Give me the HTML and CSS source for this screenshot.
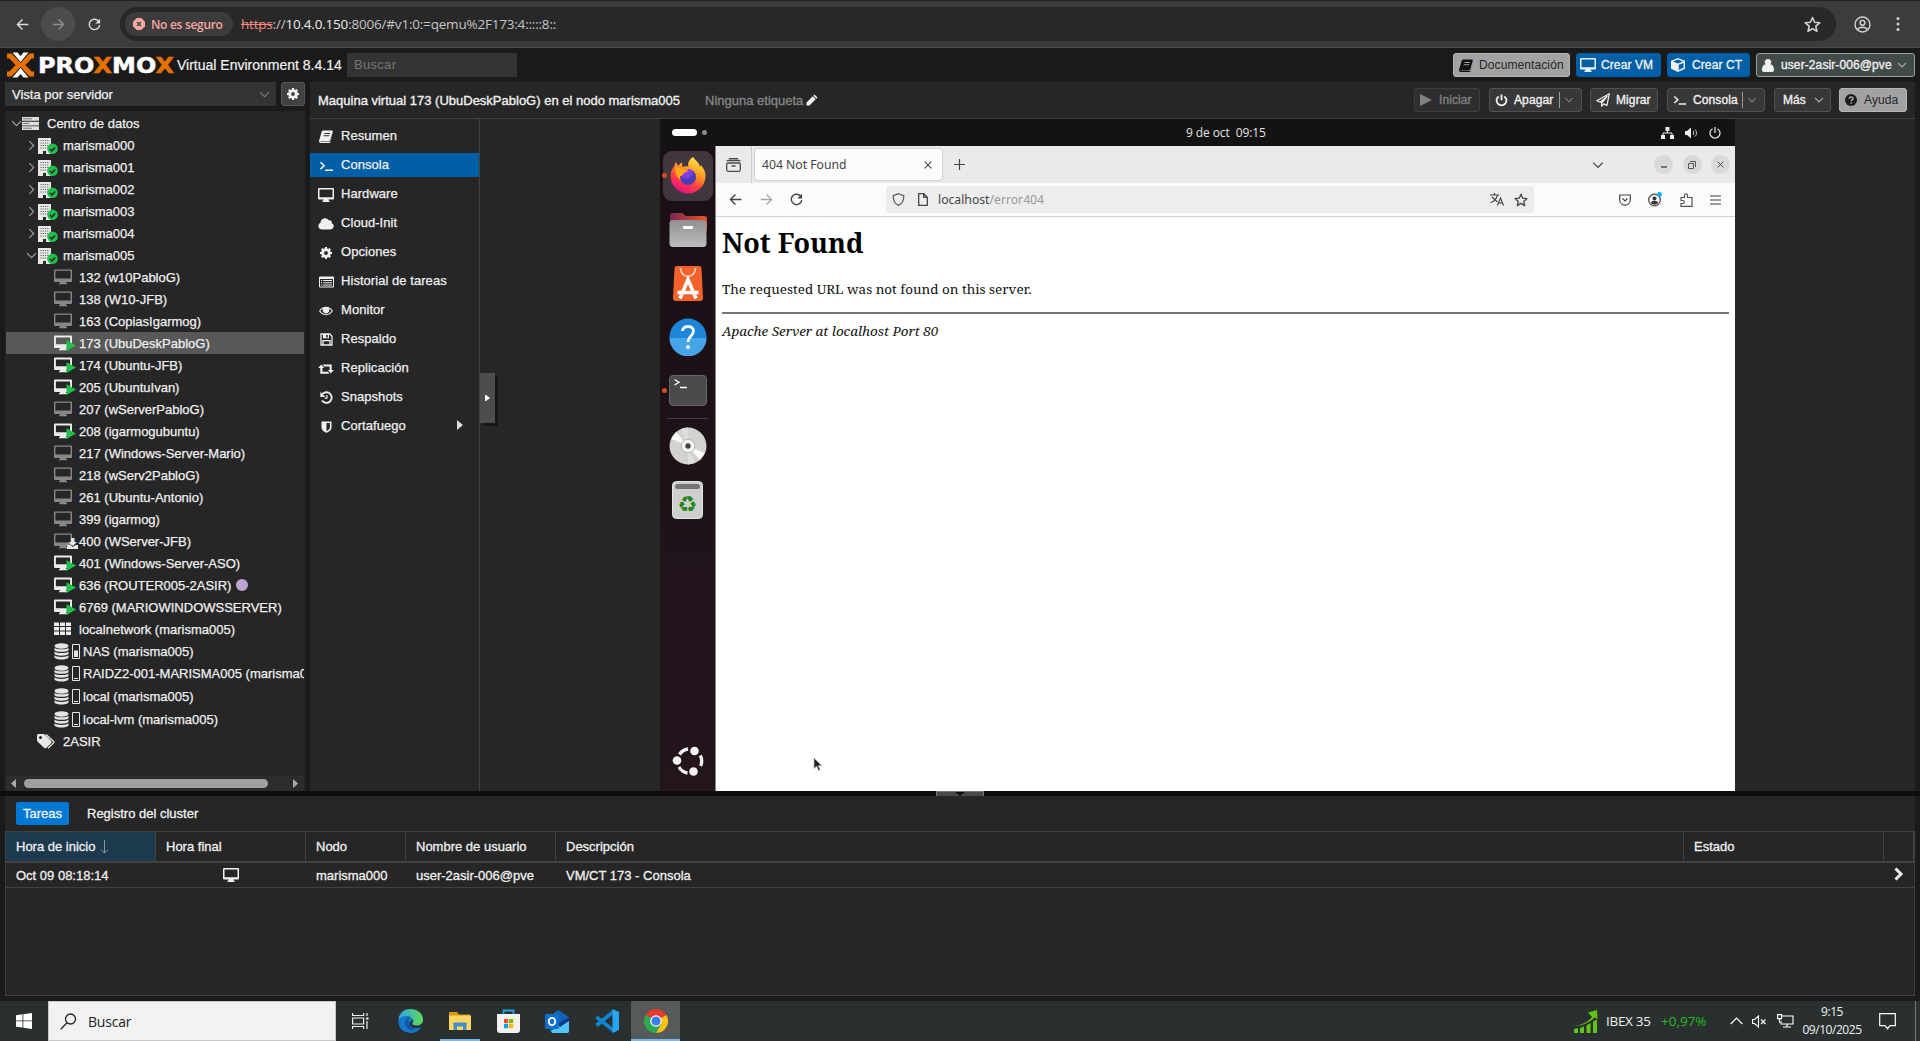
FILE: index.html
```html
<!DOCTYPE html>
<html lang="es">
<head>
<meta charset="utf-8">
<title>marisma005 - Proxmox Virtual Environment</title>
<link rel="stylesheet" href="styles.css">
</head>
<body>
<svg class="defs" width="0" height="0" aria-hidden="true">
  <symbol id="i-monitor" viewBox="0 0 18 16"><path fill-rule="evenodd" d="M1.5 0h15A1.500 1.500 0 0 1 18 1.500v10a1.500 1.500 0 0 1-1.500 1.500H11.500V14h1.200v1.500H5.300V14h1.200V13h-5A1.500 1.500 0 0 1 0 11.500v-10A1.500 1.500 0 0 1 1.500 0zm0 1.500v8h15v-8z"/></symbol>
  <symbol id="i-screen" viewBox="0 0 16 14"><path fill-rule="evenodd" d="M1 0h14a1 1 0 0 1 1 1v9.500a1 1 0 0 1-1 1h-4.500v1h1V14h-7v-1.500h1v-1H1a1 1 0 0 1-1-1V1a1 1 0 0 1 1-1zm.5 1.500v7.700h13V1.500z"/></symbol>
  <symbol id="i-play" viewBox="0 0 12 12"><path d="M0 0l12 6-12 6z"/></symbol>
  <symbol id="i-chev" viewBox="0 0 10 10"><path d="M1 3l4 4 4-4" fill="none" stroke="currentColor" stroke-width="1.100"/></symbol>
  <symbol id="i-next" viewBox="0 0 10 10"><path d="M3 1l4 4-4 4" fill="none" stroke="currentColor" stroke-width="1.100"/></symbol>
  <symbol id="i-node" viewBox="0 0 20 18"><path fill="#e8e8e8" d="M0 1h13v16H0z"/><path stroke="#666" stroke-width="1" stroke-dasharray="1.200 1" fill="none" d="M2.500 3.500h9M2.500 6h9M2.500 8.500h9M2.500 11h9"/><path fill="#262626" d="M5 14h3v3H5z"/><circle cx="14.500" cy="11.800" r="5.300" fill="#21bf4b"/><path d="M12 12l1.900 1.900 3.300-3.500" fill="none" stroke="#262626" stroke-width="1.500"/></symbol>
  <symbol id="i-off" viewBox="0 0 22 16"><path fill="#888" fill-rule="evenodd" d="M1 .5h16a1 1 0 0 1 1 1V12a1 1 0 0 1-1 1h-5v1h1v1.300H5V14h1v-1H1a1 1 0 0 1-1-1V1.500a1 1 0 0 1 1-1zm.4 1.300v7.800h15.200V1.800z"/></symbol>
  <symbol id="i-on" viewBox="0 0 22 16"><path fill="#ececec" fill-rule="evenodd" d="M1 .5h16a1 1 0 0 1 1 1V12a1 1 0 0 1-1 1h-5v1h1v1.300H5V14h1v-1H1a1 1 0 0 1-1-1V1.500a1 1 0 0 1 1-1zm.9 1.900v6.800h14.200V2.400z"/><path fill="#21bf4b" d="M12.500 5.300l9.500 5.300-9.500 5.400z"/></symbol>
  <symbol id="i-db" viewBox="0 0 26 17"><g fill="#e4e4e4"><ellipse cx="7.500" cy="3" rx="7" ry="2.700"/><path d="M.5 4.700c2 2.100 12 2.100 14 0v2.500c-2 2.200-12 2.200-14 0zM.5 8.500c2 2.100 12 2.100 14 0V11c-2 2.200-12 2.200-14 0zM.5 12.300c2 2.100 12 2.100 14 0v2.200c-2 2.700-12 2.700-14 0z"/></g><path d="M18.500 1.500h7v14h-7z" fill="none" stroke="#e4e4e4"/></symbol>
  <symbol id="i-book" viewBox="0 0 14 13"><path fill-rule="evenodd" d="M4.300.5h8.400c.8 0 1.200.6 1 1.400L11.300 10c-.2.800-.9 1.400-1.700 1.400H2c-.6 0-.9.300-.5.600h8.700c.8 0 1.300-.4 1.600-1.200L13.900 4l-2.300 8c-.3.700-.8 1-1.600 1H1.700C.3 13-.4 11.700.2 10.300L2.600 2C2.900 1 3.500.5 4.300.5zM5.500 3l-.3 1h5.600l.3-1zm-.7 2.300l-.3 1h5.600l.3-1z"/></symbol>
  <symbol id="i-term" viewBox="0 0 16 12"><path d="M1.500 2l4 3.700-4 3.700M6.500 10.500H15" fill="none" stroke="currentColor" stroke-width="1.700"/></symbol>
  <symbol id="i-cloud" viewBox="0 0 16 12"><path d="M4 11.500h8.500a3.300 3.300 0 0 0 1.300-6.300 2.400 2.400 0 0 0-3-2.900A4.500 4.500 0 0 0 2.500 4.800 3.500 3.500 0 0 0 4 11.500z"/></symbol>
  <symbol id="i-gear" viewBox="0 0 14 14"><path fill-rule="evenodd" d="M5.900 1h2.200l.4 1.700 1.100.5 1.500-.9 1.600 1.600-.9 1.500.5 1.100 1.700.4v2.200l-1.700.4-.5 1.100.9 1.500-1.600 1.600-1.500-.9-1.100.5-.4 1.700H5.900l-.4-1.700-1.100-.5-1.500.9-1.600-1.600.9-1.500-.5-1.100L0 9.100V6.900l1.700-.4.500-1.100-.9-1.500 1.600-1.600 1.500.9 1.100-.5zM7 5.800a2.200 2.200 0 1 0 0 4.400 2.200 2.200 0 0 0 0-4.400z" transform="translate(0 -1)"/></symbol>
  <symbol id="i-list" viewBox="0 0 15 12"><path fill-rule="evenodd" d="M1 .5h13a1 1 0 0 1 1 1v9a1 1 0 0 1-1 1H1a1 1 0 0 1-1-1v-9a1 1 0 0 1 1-1zM1 3v7.500h13V3zm1 1h1.200v1.100H2zm2.200 0H13v1.100H4.200zM2 6.200h1.200v1.100H2zm2.200 0H13v1.100H4.200zM2 8.400h1.200v1.100H2zm2.200 0H13v1.100H4.200z"/></symbol>
  <symbol id="i-eye" viewBox="0 0 15 10"><path fill-rule="evenodd" d="M7.500.5C11 .5 13.500 2.600 15 5c-1.500 2.400-4 4.500-7.500 4.500S1.500 7.400 0 5C1.500 2.600 4 .5 7.500.5zM4.200 2.300A8 8 0 0 0 1.400 5c1.400 2 3.500 3.400 6.100 3.400S12.200 7 13.600 5a8 8 0 0 0-2.800-2.700 3.700 3.700 0 1 1-6.600 0z"/></symbol>
  <symbol id="i-save" viewBox="0 0 13 13"><path fill="none" stroke="currentColor" stroke-width="1.300" d="M1 1h8.800L12 3.200V12H1zM3 12V7.700h7V12"/><path fill-rule="evenodd" d="M3 1h6v4.300H3zm3.200 1v2.400h1.600V2z"/></symbol>
  <symbol id="i-retweet" viewBox="0 0 16 12"><path d="M3.200 1.500L6.300 5H4.400v3.700h5.400l1.600 2H2.300V5H.2zM12.800 10.500L9.700 7h1.900V3.400H6.200l-1.600-2h9.100V7h2.100z"/></symbol>
  <symbol id="i-hist" viewBox="0 0 13 13"><path d="M2.300 3.200A5.300 5.300 0 1 1 2 9.500" fill="none" stroke="currentColor" stroke-width="1.900"/><path d="M.3 1v5h5z"/><path d="M6.900 4v3.200H4.700" fill="none" stroke="currentColor" stroke-width="1.200"/></symbol>
  <symbol id="i-shield" viewBox="0 0 11 12"><path fill-rule="evenodd" d="M.5.5h10v6c0 2.700-3 4.600-5 5.300C3.500 11.100.5 9.200.5 6.500zM5.500 2v8.100c1.700-.8 3.400-2 3.400-3.600V2z"/></symbol>
  <symbol id="i-pencil" viewBox="0 0 12 12"><path d="M8.500.5l3 3-1.200 1.200-3-3zM6.700 2.300l3 3L3.500 11.500H.5v-3z"/></symbol>
  <symbol id="i-cube" viewBox="0 0 14 14"><path fill-rule="evenodd" d="M7 0l7 2.700v8L7 14l-7-3.300v-8zm0 1.600L2 3.500l5 1.900 5-1.900zm.8 5.200v5.200l4.800-2.400V5z"/></symbol>
  <symbol id="i-user" viewBox="0 0 12 13"><path d="M6 0a3.100 3.100 0 0 1 2.300 5.300C10.800 5.600 12 8 12 11c0 1.200-.8 2-1.800 2H1.800C.8 13 0 12.200 0 11c0-3 1.200-5.400 3.700-5.700A3.100 3.100 0 0 1 6 0z"/></symbol>
  <symbol id="i-power" viewBox="0 0 14 14"><path d="M4 2.600a5.300 5.300 0 1 0 6 0M7 .5v6.300" fill="none" stroke="currentColor" stroke-width="2"/></symbol>
  <symbol id="i-plane" viewBox="0 0 14 14"><path d="M13.300.7L.8 7.800l3.400 1.500L11 3.500 5.600 10v3.300l2-2.400 3.400 1.500z" fill="none" stroke="currentColor" stroke-width="1.200" stroke-linejoin="round"/></symbol>
  <symbol id="i-x" viewBox="0 0 8 8"><path d="M.7.700l6.600 6.600M7.300.700L.700 7.300" fill="none" stroke="currentColor" stroke-width="1.100"/></symbol>
  <symbol id="i-star" viewBox="0 0 14 14"><path d="M7 1.200l1.700 4 4.300.4-3.300 2.800 1 4.200L7 10.400l-3.700 2.200 1-4.200L1 5.600l4.300-.4z" fill="none" stroke="currentColor" stroke-width="1.300" stroke-linejoin="round"/></symbol>
  <symbol id="i-reload" viewBox="0 0 14 14"><path d="M12 4.300A5.600 5.600 0 1 0 12.600 7.500" fill="none" stroke="currentColor" stroke-width="1.500"/><path d="M13 .8v5.100H7.900z"/></symbol>
  <symbol id="i-back" viewBox="0 0 14 14"><path d="M13.300 7H1.500M7 1.500L1.500 7 7 12.500" fill="none" stroke="currentColor" stroke-width="1.500"/></symbol>
  <symbol id="i-fwd" viewBox="0 0 14 14"><path d="M.7 7h11.800M7 1.500L12.500 7 7 12.500" fill="none" stroke="currentColor" stroke-width="1.500"/></symbol>
</svg>

<header class="chrome">
  <span class="nav"><svg width="13" height="13"><use href="#i-back"/></svg></span>
  <span class="nav fwd"><svg width="13" height="13"><use href="#i-fwd"/></svg></span>
  <span class="nav"><svg width="13" height="13"><use href="#i-reload"/></svg></span>
  <div class="omni">
    <span class="chip"><svg width="12" height="12" viewBox="0 0 12 12"><path d="M3.700 0h4.600L12 3.700v4.600L8.300 12H3.700L0 8.300V3.700z" fill="#f6a9a3"/><path d="M4 4l4 4M8 4l-4 4" stroke="#3c3c3c" stroke-width="1.400"/></svg><b>No es seguro</b></span>
    <span class="url"><s>https</s><i>://</i>10.4.0.150<i class="port">:8006/#v1:0:=qemu%2F173:4:::::8::</i></span>
    <svg class="fav" width="17" height="17"><use href="#i-star"/></svg>
  </div>
  <svg class="profile" width="17" height="17" viewBox="0 0 17 17" fill="none" stroke="#d4d4d4" stroke-width="1.400"><circle cx="8.500" cy="8.500" r="7.500"/><circle cx="8.500" cy="6.800" r="2.400"/><path d="M3.500 13.700c2-3.300 8-3.300 10 0"/></svg>
  <svg class="dots" width="4" height="16" viewBox="0 0 4 16" fill="#d4d4d4"><circle cx="2" cy="2.500" r="1.500"/><circle cx="2" cy="8" r="1.500"/><circle cx="2" cy="13.500" r="1.500"/></svg>
</header>

<div class="pve-head">
  <svg class="logo" width="170" height="28" viewBox="0 0 170 28">
    <g fill="none" stroke-width="5"><path stroke="#e57000" d="M2 5h3.500l8.500 9-8.500 9H2M29 5h-3.500L17 14l8.500 9H29"/></g>
    <path fill="#fff" d="M7.500 1.500h5l3 3.500 3-3.500h5L15.500 11zM7.500 26.500h5l3-3.500 3 3.500h5L15.500 17z"/>
    <text x="33" y="22" textLength="136" lengthAdjust="spacingAndGlyphs" class="logo-t">PRO<tspan class="or">X</tspan>MO<tspan class="or">X</tspan></text>
  </svg>
  <span class="ver">Virtual Environment 8.4.14</span>
  <div class="search">Buscar</div>
  <div class="head-btns">
    <span class="btn light w117"><svg width="14" height="13"><use href="#i-book"/></svg>Documentación</span>
    <span class="btn blue w85"><svg width="16" height="14"><use href="#i-screen"/></svg>Crear VM</span>
    <span class="btn blue w83"><svg width="14" height="14"><use href="#i-cube"/></svg>Crear CT</span>
    <span class="btn usr w159"><svg width="12" height="13"><use href="#i-user"/></svg>user-2asir-006@pve<svg class="cv" width="10" height="10"><use href="#i-chev"/></svg></span>
  </div>
</div>

<main class="mid">
  <aside class="left">
    <div class="view"><div class="select">Vista por servidor<svg width="11" height="11"><use href="#i-chev"/></svg></div><span class="gearbtn"><svg width="12" height="12"><use href="#i-gear"/></svg></span></div>
    <div class="tree">
      <div class="row"><svg class="ex" width="11" height="11"><use href="#i-chev"/></svg><svg class="srv" width="17" height="13" viewBox="0 0 17 13"><path fill="#dedede" d="M0 0h17v3.700H0zM0 4.700h17v3.700H0zM0 9.300h17V13H0z"/><path stroke="#777" d="M1 1.800h9M1 6.500h6M1 11.200h9"/></svg>Centro de datos</div>
      <div class="row n1"><svg class="ex" width="11" height="11"><use href="#i-next"/></svg><svg width="20" height="18"><use href="#i-node"/></svg>marisma000</div>
      <div class="row n1"><svg class="ex" width="11" height="11"><use href="#i-next"/></svg><svg width="20" height="18"><use href="#i-node"/></svg>marisma001</div>
      <div class="row n1"><svg class="ex" width="11" height="11"><use href="#i-next"/></svg><svg width="20" height="18"><use href="#i-node"/></svg>marisma002</div>
      <div class="row n1"><svg class="ex" width="11" height="11"><use href="#i-next"/></svg><svg width="20" height="18"><use href="#i-node"/></svg>marisma003</div>
      <div class="row n1"><svg class="ex" width="11" height="11"><use href="#i-next"/></svg><svg width="20" height="18"><use href="#i-node"/></svg>marisma004</div>
      <div class="row n1"><svg class="ex" width="11" height="11"><use href="#i-chev"/></svg><svg width="20" height="18"><use href="#i-node"/></svg>marisma005</div>
      <div class="row n2"><svg width="22" height="16"><use href="#i-off"/></svg>132 (w10PabloG)</div>
      <div class="row n2"><svg width="22" height="16"><use href="#i-off"/></svg>138 (W10-JFB)</div>
      <div class="row n2"><svg width="22" height="16"><use href="#i-off"/></svg>163 (CopiasIgarmog)</div>
      <div class="row n2 sel"><svg width="22" height="16"><use href="#i-on"/></svg>173 (UbuDeskPabloG)</div>
      <div class="row n2"><svg width="22" height="16"><use href="#i-on"/></svg>174 (Ubuntu-JFB)</div>
      <div class="row n2"><svg width="22" height="16"><use href="#i-on"/></svg>205 (UbuntuIvan)</div>
      <div class="row n2"><svg width="22" height="16"><use href="#i-off"/></svg>207 (wServerPabloG)</div>
      <div class="row n2"><svg width="22" height="16"><use href="#i-on"/></svg>208 (igarmogubuntu)</div>
      <div class="row n2"><svg width="22" height="16"><use href="#i-off"/></svg>217 (Windows-Server-Mario)</div>
      <div class="row n2"><svg width="22" height="16"><use href="#i-off"/></svg>218 (wServ2PabloG)</div>
      <div class="row n2"><svg width="22" height="16"><use href="#i-off"/></svg>261 (Ubuntu-Antonio)</div>
      <div class="row n2"><svg width="22" height="16"><use href="#i-off"/></svg>399 (igarmog)</div>
      <div class="row n2"><svg class="wide" width="25" height="16" viewBox="0 0 25 16"><use href="#i-off" width="22" height="16"/><path fill="#e8e8e8" d="M17 5h3.500v4H23l-4.200 4-4.300-4H17zM13 12h3l2.800 2 2.700-2H24v4H13z"/></svg>400 (WServer-JFB)</div>
      <div class="row n2"><svg width="22" height="16"><use href="#i-on"/></svg>401 (Windows-Server-ASO)</div>
      <div class="row n2"><svg width="22" height="16"><use href="#i-on"/></svg>636 (ROUTER005-2ASIR)<span class="tagdot"></span></div>
      <div class="row n2"><svg width="22" height="16"><use href="#i-on"/></svg>6769 (MARIOWINDOWSSERVER)</div>
      <div class="row n2"><svg width="22" height="14" viewBox="0 0 22 14"><path fill="#ececec" d="M0 .5h5V4H0zm6 0h5V4H6zm6 0h5V4h-5zM0 5h5v3.500H0zm6 0h5v3.500H6zm6 0h5v3.500h-5zM0 9.500h5V13H0zm6 0h5V13H6zm6 0h5V13h-5z"/></svg>localnetwork (marisma005)</div>
      <div class="row n2 st"><svg width="26" height="17" viewBox="0 0 26 17"><use href="#i-db"/><path fill="#e4e4e4" d="M20 7.500h4V14h-4z"/></svg>NAS (marisma005)</div>
      <div class="row n2 st"><svg width="26" height="17" viewBox="0 0 26 17"><use href="#i-db"/><path fill="#e4e4e4" d="M20 13h4v1h-4z"/></svg>RAIDZ2-001-MARISMA005 (marisma005)</div>
      <div class="row n2 st"><svg width="26" height="17" viewBox="0 0 26 17"><use href="#i-db"/><path fill="#e4e4e4" d="M20 13h4v1h-4z"/></svg>local (marisma005)</div>
      <div class="row n2 st"><svg width="26" height="17" viewBox="0 0 26 17"><use href="#i-db"/><path fill="#e4e4e4" d="M20 13h4v1h-4z"/></svg>local-lvm (marisma005)</div>
      <div class="row tag"><svg width="19" height="15" viewBox="0 0 19 15"><path fill="#e8e8e8" fill-rule="evenodd" d="M0 1.500C0 .7.700 0 1.500 0h4.600c.8 0 1.600.3 2.200.9l6 6c.6.600.6 1.400 0 2l-5 5c-.6.600-1.400.6-2 0l-6.400-6C.3 7.300 0 6.500 0 5.700zM3.500 2a1.500 1.500 0 1 0 0 3 1.500 1.500 0 0 0 0-3z"/><path d="M9 .5l7.500 6.700c.7.700.7 1 0 1.700L11 14.300" stroke="#e8e8e8" stroke-width="1.300" fill="none"/></svg>2ASIR</div>
      <div class="hscroll"><svg width="5" height="9" viewBox="0 0 5 9"><path fill="#aaa" d="M5 0v9L0 4.500z"/></svg><span class="thumb"></span><svg width="5" height="9" viewBox="0 0 5 9"><path fill="#aaa" d="M0 0v9l5-4.500z"/></svg></div>
    </div>
  </aside>

  <section class="main">
    <div class="title"><span class="tt">Maquina virtual 173 (UbuDeskPabloG) en el nodo marisma005</span><span class="notag">Ninguna etiqueta</span><svg class="pen" width="12" height="12"><use href="#i-pencil"/></svg>
      <div class="tools">
        <span class="btn dis w66"><svg width="12" height="12"><use href="#i-play"/></svg>Iniciar</span>
        <span class="btn w93"><svg width="13" height="13"><use href="#i-power"/></svg>Apagar<svg class="cv split" width="21" height="16" viewBox="0 0 21 16"><path d="M.5 0v16M6.500 6l3.500 4 3.500-4" fill="none" stroke="#999"/></svg></span>
        <span class="btn w68"><svg width="14" height="14"><use href="#i-plane"/></svg>Migrar</span>
        <span class="btn w98"><svg width="14" height="12"><use href="#i-term"/></svg>Consola<svg class="cv split" width="21" height="16" viewBox="0 0 21 16"><path d="M.5 0v16M6.500 6l3.500 4 3.500-4" fill="none" stroke="#999"/></svg></span>
        <span class="btn w57 more">Más<svg class="cv" width="10" height="10"><use href="#i-chev"/></svg></span>
        <span class="btn light w68 help"><svg width="12" height="12" viewBox="0 0 12 12"><circle cx="6" cy="6" r="6" fill="#1b1b1b"/><path d="M4.100 4.700c.1-2.400 3.900-2.300 3.900-.2C8 6 6.200 5.900 6.200 7.300M6.200 8.200v1.500" stroke="#ababab" stroke-width="1.500" fill="none"/></svg>Ayuda</span>
      </div>
    </div>
    <div class="body">
      <nav class="menu">
        <div class="mi"><span><svg width="14" height="13"><use href="#i-book"/></svg></span>Resumen</div>
        <div class="mi act"><span><svg width="15" height="12"><use href="#i-term"/></svg></span>Consola</div>
        <div class="mi"><span><svg width="16" height="14"><use href="#i-screen"/></svg></span>Hardware</div>
        <div class="mi"><span><svg width="16" height="12"><use href="#i-cloud"/></svg></span>Cloud-Init</div>
        <div class="mi"><span><svg width="12" height="12"><use href="#i-gear"/></svg></span>Opciones</div>
        <div class="mi"><span><svg width="15" height="12"><use href="#i-list"/></svg></span>Historial de tareas</div>
        <div class="mi"><span><svg width="14" height="10"><use href="#i-eye"/></svg></span>Monitor</div>
        <div class="mi"><span><svg width="13" height="13"><use href="#i-save"/></svg></span>Respaldo</div>
        <div class="mi"><span><svg width="16" height="12"><use href="#i-retweet"/></svg></span>Replicación</div>
        <div class="mi"><span><svg width="13" height="13"><use href="#i-hist"/></svg></span>Snapshots</div>
        <div class="mi"><span><svg width="11" height="12"><use href="#i-shield"/></svg></span>Cortafuego<svg class="sub" width="6" height="10" viewBox="0 0 6 10"><path d="M0 0l6 5-6 5z" fill="#ddd"/></svg></div>
        <div class="handle"><svg width="5" height="6" viewBox="0 0 5 6"><path d="M0 0h1l4 3-4 3H0z" fill="#fff"/></svg></div>
      </nav>

      <div class="vm">
        <div class="gbar"><span class="pill"></span><span class="pd"></span><span class="date">9 de oct&nbsp; 09:15</span>
          <div class="gi">
            <svg width="13" height="12" viewBox="0 0 13 12" fill="#eee"><path d="M4.500 0h4v4h-4zM0 8h4v4H0zM9 8h4v4H9z"/><path d="M6.500 3v3M2 8.500V6h9v2.500" stroke="#eee" fill="none"/></svg>
            <svg width="13" height="12" viewBox="0 0 13 12" fill="#eee"><path d="M0 4h2l4-3.500v11L2 8H0z"/><path d="M8 4c1 1.300 1 2.700 0 4M10 2.500c2 2.200 2 4.800 0 7" stroke="#ccc" fill="none"/></svg>
            <svg width="12" height="12" viewBox="0 0 12 12" fill="none" stroke="#ddd" stroke-width="1.300"><path d="M3.500 1.700a5 5 0 1 0 5 0M6 0v6"/></svg>
          </div>
        </div>
        <div class="desk">
          <div class="dock">
            <div class="tile"><svg width="36" height="37" viewBox="0 0 36 37"><defs><linearGradient id="ff" x1=".8" y1="0" x2=".3" y2="1"><stop offset="0" stop-color="#fff04a"/><stop offset=".4" stop-color="#ff9a1f"/><stop offset=".7" stop-color="#ff3b47"/><stop offset="1" stop-color="#e0108a"/></linearGradient><radialGradient id="fp" cx=".4" cy=".2"><stop offset="0" stop-color="#b833e1"/><stop offset=".6" stop-color="#7542e5"/><stop offset="1" stop-color="#4b3bb5"/></radialGradient></defs><path fill="url(#ff)" d="M23 0c2 3 5 5 6 7l1 3 1-2c2 3 4.500 6 4.500 11A17.500 17.500 0 0 1 .5 19c0-4 2-8 4-10l1-4 3 4c1-2 2-3 3.500-3.500l.5 4.500c2-1 4-1 6-.5C17 6 20 2 23 0z"/><circle cx="18" cy="20" r="8" fill="url(#fp)"/><path fill="#ffa61f" d="M5 10c3 0 5 1 8 2.500h5c0 2-3 2.500-4 3.500s-1.500 3-4 3c1 3 0 4-1 3-3-3-4-8-4-12z"/></svg></div>
            <svg class="d-files" width="38" height="34" viewBox="0 0 38 34"><defs><linearGradient id="fo"><stop offset="0" stop-color="#7c2457"/><stop offset="1" stop-color="#e95420"/></linearGradient><linearGradient id="fg" x2="0" y2="1"><stop offset="0" stop-color="#919191"/><stop offset="1" stop-color="#bdbdbd"/></linearGradient></defs><path fill="url(#fo)" d="M1 3a3 3 0 0 1 3-3h9l4 3h18a3 3 0 0 1 3 3v12H1z"/><rect x=".5" y="7" width="37" height="27" rx="3.500" fill="url(#fg)"/><rect x="14" y="13" width="10" height="3" rx="1" fill="#fff"/></svg>
            <svg class="d-app" width="30" height="35" viewBox="0 0 30 35"><path fill="#f4622c" d="M4 0h22a2.500 2.500 0 0 1 2.500 2.500L30 32a3 3 0 0 1-3 3H3a3 3 0 0 1-3-3L1.500 2.500A2.500 2.500 0 0 1 4 0z"/><path fill="none" stroke="#fbd9cb" stroke-width="1.500" d="M7.500 2c0 11 15 11 15 0"/><path fill="none" stroke="#fff" stroke-width="3.500" d="M7 32.500l8-19 8 19M4.500 26.500h21"/></svg>
            <svg class="d-help" width="38" height="38" viewBox="0 0 38 38"><circle cx="19" cy="19" r="18.500" fill="#1d86d8"/><path fill="#45a5e6" d="M.5 20h37a18.500 18.500 0 0 1-37 0z"/><path fill="none" stroke="#fff" stroke-width="2.800" d="M13.500 13c0-6 11-6 11 0 0 5-5.500 5-5.500 11"/><circle cx="19" cy="29" r="2" fill="#fff"/></svg>
            <svg class="d-term" width="38" height="31" viewBox="0 0 38 31"><rect x=".5" y=".5" width="37" height="30" rx="3.500" fill="#4a4a4a" stroke="#666"/><path fill="none" stroke="#fff" stroke-width="1.300" d="M5.500 4.500L10 7.300 5.500 10M11 12.500h7"/></svg>
            <span class="sepd"></span>
            <svg class="d-disc" width="38" height="38" viewBox="0 0 38 38"><circle cx="19" cy="19" r="18.500" fill="#d2d2d2"/><path fill="#fafafa" d="M19 19L2.500 12 7 5zM19 19l16.500 7-4.500 7z"/><path fill="#dedede" d="M19 19L12 2l7-1.500zM19 19l7 17-7 1.500z"/><circle cx="19" cy="19" r="6.800" fill="#f7f5f1" stroke="#b9b2a6"/><circle cx="19" cy="19" r="2.700" fill="#444"/></svg>
            <svg class="d-trash" width="31" height="38" viewBox="0 0 31 38"><rect x=".5" y=".5" width="30" height="37" rx="4" fill="#cfcfcf" stroke="#e6e6e6"/><rect x="3" y="3" width="25" height="5" rx="2.500" fill="#757575"/><text x="15.500" y="31" text-anchor="middle" class="rec">♻</text></svg>
            <svg class="d-ubu" width="32" height="32" viewBox="0 0 32 32"><path d="M7.500 9.500A12 12 0 0 1 16 4M28.300 10.500a12 12 0 0 1 .3 10.500M15.500 28A12 12 0 0 1 7 22" fill="none" stroke="#f2f2f2" stroke-width="3.300"/><circle cx="5" cy="15.500" r="4.300" fill="#f2f2f2"/><circle cx="22.500" cy="6" r="4.300" fill="#f2f2f2"/><circle cx="21.500" cy="26.500" r="4.300" fill="#f2f2f2"/></svg>
            <i class="run r1"></i><i class="run r2"></i>
          </div>
          <div class="ff">
            <div class="tabs">
              <span class="hist"><svg width="15" height="14" viewBox="0 0 15 14" fill="none" stroke="#4a4a4a" stroke-width="1.300"><rect x=".7" y="5" width="13.600" height="8.300" rx="1.500"/><path d="M1 3.500c0-.7.500-1 1-1h11c.5 0 1 .3 1 1M3 .7h9M5.500 8h4"/></svg></span>
              <span class="tab">404 Not Found<svg width="8" height="8"><use href="#i-x"/></svg></span>
              <svg class="plus" width="11" height="11" viewBox="0 0 11 11"><path d="M5.500 0v11M0 5.500h11" stroke="#444" stroke-width="1.200"/></svg>
              <svg class="tchev" width="12" height="12"><use href="#i-chev"/></svg>
              <span class="wb"><svg width="8" height="8" viewBox="0 0 8 8"><path d="M1 6h6" stroke="#333" stroke-width="1.200"/></svg></span>
              <span class="wb"><svg width="8" height="8" viewBox="0 0 8 8" fill="none" stroke="#555"><path d="M.5 2.500h5v5h-5zM2 .5h5.500V6"/></svg></span>
              <span class="wb"><svg width="7" height="7"><use href="#i-x"/></svg></span>
            </div>
            <div class="bar">
              <svg class="b1" width="13" height="13"><use href="#i-back"/></svg>
              <svg class="b2" width="13" height="13"><use href="#i-fwd"/></svg>
              <svg class="b3" width="13" height="13"><use href="#i-reload"/></svg>
              <div class="ub">
                <svg width="13" height="13" viewBox="0 0 13 13" fill="none" stroke="#555" stroke-width="1.200"><path d="M6.500.7l5.300 2c0 5-1.300 8-5.300 9.700C2.500 10.700 1.200 7.700 1.200 2.700z"/></svg>
                <svg class="pg" width="10" height="13" viewBox="0 0 10 13" fill="none" stroke="#444" stroke-width="1.300"><path d="M.7.700h5L9.300 4.300v8H.7zM5.700.7v3.600h3.600"/></svg>
                <span class="lu">localhost<em>/error404</em></span>
                <svg class="tr" width="14" height="13" viewBox="0 0 14 13" fill="none" stroke="#444" stroke-width="1.200"><path d="M0 2h9M4.500 0v2M2 4l5.500 5M7.500 2C7 6 3 9 .5 9.500M7.500 12.500l3-7.500 3 7.500M8.500 10h4"/></svg>
                <svg width="14" height="14"><use href="#i-star"/></svg>
              </div>
              <div class="fi">
                <svg width="12" height="12" viewBox="0 0 12 12" fill="none" stroke="#444" stroke-width="1.200"><path d="M.7 1h10.600v4.500c0 7.400-10.600 7.400-10.600 0zM3.500 4.500L6 7l2.500-2.500"/></svg>
                <svg width="14" height="15" viewBox="0 0 14 15"><circle cx="6.500" cy="8" r="5.800" fill="none" stroke="#444" stroke-width="1.200"/><circle cx="6.500" cy="6.500" r="2" fill="#333"/><path d="M3 11c0-3 7-3 7 0-2 2-5 2-7 0z" fill="#333"/><circle cx="11.500" cy="2.500" r="2.400" fill="#00b3f4"/></svg>
                <svg width="13" height="14" viewBox="0 0 13 14" fill="none" stroke="#555" stroke-width="1.200"><path d="M1 4.500h3.500V2.300c0-2 3-2 3 0v2.200H12v8.800H1v-2.800h2c1.800 0 1.800-3 0-3H1z"/></svg>
                <svg width="11" height="10" viewBox="0 0 11 10"><path d="M0 1h11M0 5h11M0 9h11" stroke="#444" stroke-width="1.200"/></svg>
              </div>
            </div>
            <article class="page"><h1>Not Found</h1><p>The requested URL was not found on this server.</p><hr><address>Apache Server at localhost Port 80</address></article>
          </div>
          <svg class="cursor" width="10" height="15" viewBox="0 0 10 15"><path d="M1 1v10.500l2.600-2.300 2 4.300 1.600-.8-2-4h3.600z" fill="#222" stroke="#bbb" stroke-width=".7"/></svg>
        </div>
      </div>
    </div>
  </section>
</main>

<div class="splitter"><span><svg width="10" height="4" viewBox="0 0 10 4"><path d="M0 0h10L5 4z" fill="#0d0d0d"/></svg></span></div>

<section class="tasks">
  <div class="tt-tabs"><span class="tb on">Tareas</span><span class="tb">Registro del cluster</span></div>
  <div class="grid">
    <div class="gr gh"><span class="sorted">Hora de inicio<svg width="9" height="14" viewBox="0 0 9 14"><path d="M4.500 0v13M1 9.500L4.500 13 8 9.500" fill="none" stroke="#8a969c"/></svg></span><span>Hora final</span><span>Nodo</span><span>Nombre de usuario</span><span>Descripción</span><span>Estado</span><span></span></div>
    <div class="gr gd"><span>Oct 09 08:18:14</span><span class="cm"><svg width="16" height="14"><use href="#i-screen"/></svg></span><span>marisma000</span><span>user-2asir-006@pve</span><span>VM/CT 173 - Consola</span><span></span><span class="ar"><svg width="10" height="14" viewBox="0 0 10 14"><path d="M1.500 1.500L7 7l-5.500 5.500" fill="none" stroke="#eee" stroke-width="3"/></svg></span></div>
  </div>
</section>

<footer class="taskbar">
  <span class="start"><svg width="16" height="16" viewBox="0 0 16 16" fill="#fff"><path d="M0 2.200L6.500 1.300v6.200H0zM7.300 1.200L16 0v7.500H7.300zM0 8.300h6.500v6.300L0 13.700zM7.300 8.300H16V16l-8.700-1.200z"/></svg></span>
  <div class="wsearch"><svg width="17" height="17" viewBox="0 0 17 17" fill="none" stroke="#222" stroke-width="1.300"><circle cx="10.500" cy="6" r="5"/><path d="M7 9.700L.7 16.300"/></svg>Buscar</div>
  <span class="ti tv"><svg width="17" height="16" viewBox="0 0 17 16" fill="none" stroke="#eee" stroke-width="1.200"><path d="M.6 0v2.500h11V0M.6 16v-2.500h11V16M.6 5h11v6H.6zM15 0v3M15 8v8"/><path d="M14 4.500h2.500v2H14z" fill="#eee" stroke="none"/></svg></span>
  <span class="ti"><svg width="25" height="24" viewBox="0 0 25 24"><defs><linearGradient id="eg"><stop offset="0" stop-color="#2aa7e8"/><stop offset="1" stop-color="#5fd956"/></linearGradient></defs><path fill="#1477cf" d="M1 8C-1 15 2 24 13 24c5 0 9-3 10.500-6.500-5 3-12 1.500-12-3.500L16 9C11 3 4 3 1 8z"/><path fill="url(#eg)" d="M.5 11C1 4 6 0 12.500 0 20 0 25 5 25 10.500c0 4-3 6-6.500 6-3 0-5-.8-4-2.500 1.500-2 .5-6-5-7C6 6.500 2 8 .5 11z"/><path fill="#0d4c93" d="M7 13c0-3 2-5 5-5.500-3 5-1 11 5 12.500-4 3-10 0-10-7z" opacity=".7"/></svg></span>
  <span class="ti ul"><svg width="22" height="19" viewBox="0 0 22 19"><path fill="#d99a0c" d="M0 0h8l2 2.500h11V8H0z"/><path fill="#fcd462" d="M0 3.500h22V18H0z"/><path fill="#3e8fd0" d="M4.500 10.500h13V18H14v-3.500H8V18H4.500z"/></svg></span>
  <span class="ti"><svg width="23" height="24" viewBox="0 0 23 24"><path d="M6.500 6V1.500h10V6" fill="none" stroke="#1fa6e8" stroke-width="1.800"/><path fill="#f2f2f2" d="M0 5h23v16a3 3 0 0 1-3 3H3a3 3 0 0 1-3-3z"/><path fill="#f25022" d="M7 10h4.200v4.200H7z"/><path fill="#7fba00" d="M12 10h4.200v4.200H12z"/><path fill="#00a4ef" d="M7 15h4.200v4.200H7z"/><path fill="#ffb900" d="M12 15h4.200v4.200H12z"/></svg></span>
  <span class="ti"><svg width="25" height="23" viewBox="0 0 25 23"><path fill="#1263b8" d="M5 6l8-6 11 7v13a2 2 0 0 1-2 2H7a2 2 0 0 1-2-2z"/><path fill="#52c6f7" d="M24 10v11a2 2 0 0 1-2 2H7l-1-2z"/><path fill="#0c3a86" d="M13 14l11-7v4l-9 6z"/><rect y="4" width="14" height="15" rx="1.500" fill="#0f6fca"/><ellipse cx="7" cy="11.500" rx="3.200" ry="3.700" fill="none" stroke="#fff" stroke-width="1.800"/></svg></span>
  <span class="ti"><svg width="24" height="24" viewBox="0 0 24 24"><path fill="none" stroke="#1384d0" stroke-width="3.600" d="M18.500 2.500L1.500 16.500M18.500 21.500L1.500 8"/><path fill="#27a5f3" d="M17.500 0L24 3v18l-6.500 3z"/></svg></span>
  <span class="ti ul cur"><svg width="24" height="24" viewBox="0 0 24 24"><path fill="#e33b2e" d="M12 12L1.600 6a12 12 0 0 1 20.800 0z"/><path fill="#fbc116" d="M12 12l10.400-6A12 12 0 0 1 12 24l5.200-9z"/><path fill="#2da94f" d="M12 24A12 12 0 0 1 1.600 6L12 12l5 3z"/><circle cx="12" cy="12" r="5.800" fill="#fff"/><circle cx="12" cy="12" r="4.600" fill="#3b7ded"/></svg></span>
  <div class="tray">
    <svg class="chart" width="24" height="23" viewBox="0 0 24 23" fill="#5fc413"><path d="M0 19l4-1v5H0zM6 18l4-1.500V23H6zM12.500 15.500l4-2.500v10h-4zM19 11.500l4-2V23h-4z"/><path d="M0 16c8-1 14-4 18-9l-4-4.500L23 0l.5 9-3-1.500C15 13 8 16 0 16z"/></svg>
    <span class="ibex">IBEX 35</span><span class="pct">+0,97%</span>
    <svg class="up" width="13" height="8" viewBox="0 0 13 8"><path d="M.7 7l5.800-6 5.800 6" fill="none" stroke="#fff" stroke-width="1.200"/></svg>
    <svg class="mute" width="15" height="13" viewBox="0 0 15 13" fill="none" stroke="#fff" stroke-width="1.100"><path d="M.6 4.500h2L6.500 1v11L2.600 8.500h-2zM9 4.500l4.500 4.500M13.500 4.500L9 9"/></svg>
    <svg class="net" width="17" height="14" viewBox="0 0 17 14" fill="none" stroke="#fff" stroke-width="1.100"><path d="M5 2h11v8H4V7M10 10v3M6 13h8M.6.600h4v4h-4zM2.500 4.500V9"/></svg>
    <div class="clock"><span>9:15</span><span>09/10/2025</span></div>
    <svg class="notif" width="17" height="17" viewBox="0 0 17 17"><path d="M.7.700h15.600v12H11l-2.500 3-2.500-3H.7z" fill="none" stroke="#fff" stroke-width="1.200"/></svg>
    <span class="peek"></span>
  </div>
</footer>
</body>
</html>
```
FILE: styles.css
```css
*{box-sizing:border-box}
body{margin:0;width:1920px;height:1041px;overflow:hidden;background:#1a1a1a;color:#f0f0f0;font:13px "Liberation Sans",Arial,sans-serif;display:flex;flex-direction:column;fill:currentColor}
svg{display:block;flex:none}
.defs{position:absolute}
span,div{white-space:nowrap}

/* browser toolbar */
.chrome{height:48px;margin-top:0;flex:none;display:flex;align-items:center;padding:1px 18px 0 5px;background:linear-gradient(#232323 1px,#3c3c3c 1px);border-bottom:1px solid #4b4b4b;color:#ddd}
.nav{width:34px;height:34px;border-radius:50%;display:flex;align-items:center;justify-content:center;margin-right:2px}
.nav.fwd{background:#4c4c4c;color:#8d8d8d}
.omni{width:1716px;height:34px;margin-left:7px;border-radius:17px;background:#282828;display:flex;align-items:center;padding-left:5px}
.chip{width:108px;height:24px;border-radius:12px;background:#3c3c3c;display:flex;align-items:center;padding-left:8px;color:#f6a9a3;font-family:"Open Sans",sans-serif;font-size:12px}
.chip b{font-weight:600;margin-left:6px;letter-spacing:-.3px}
.url{margin-left:8px;font:13.500px "Open Sans",sans-serif;color:#eee;letter-spacing:-.2px}
.url s{color:#f28b82}.url i{font-style:normal;color:#c4c4c4}
.fav{margin-left:auto;margin-right:15px;color:#d4d4d4}
.profile{margin-left:18px}.dots{margin-left:auto;margin-right:2px}

/* product header */
.pve-head{height:34px;flex:none;display:flex;align-items:center;padding:0 5px}
.logo-t{font:bold 22px "DejaVu Sans",sans-serif;fill:#fff;stroke:#fff;stroke-width:.5px}
.or{fill:#e57000;stroke:#e57000}
.ver{width:170px;margin-left:2px;font-size:14px;letter-spacing:0;-webkit-text-stroke:.2px}
.search{width:170px;height:24px;background:#333;color:#767676;padding:0 7px;line-height:24px;letter-spacing:.3px}
.head-btns{margin-left:auto;display:flex;gap:6px}
.btn{height:24px;border:1px solid #505050;border-radius:3px;background:#383838;display:flex;align-items:center;padding-left:5px;font-size:12px;letter-spacing:.1px;-webkit-text-stroke:.35px}
.btn svg:first-child{margin-right:6px}
.btn .cv{margin-left:auto;margin-right:7px;color:#aaa}
.btn .split{margin-right:1px}
.btn.light{background:#a2a2a2;border-color:#b5b5b5;color:#262626;-webkit-text-stroke:0}
.btn.light svg{color:#111}
.btn.blue{background:#005fa6;border-color:#005fa6;padding-left:3px}
.btn.blue svg:first-child{margin-right:5px}
.btn.blue.w83 svg:first-child{margin-right:7px}
.btn.usr{background:#424b4a;border-color:#8fa3a0}
.btn.usr svg:first-child{margin-right:7px}
.btn.dis{color:#808080;background:#2e2e2e;border-color:#3d3d3d}
.btn.more{padding-left:8px}
.w117{width:117px}.w85{width:85px}.w83{width:83px}.w159{width:159px}.w66{width:66px}.w93{width:93px}.w68{width:68px}.w98{width:98px}.w57{width:57px}

/* resource tree */
.mid{height:709px;flex:none;display:flex;gap:5px;padding:0 5px}
.left{width:300px;display:flex;flex-direction:column;gap:5px;-webkit-text-stroke:.25px}
.view{display:flex;gap:5px}
.select{width:271px;height:24px;background:#333;display:flex;align-items:center;justify-content:space-between;padding:0 6px 0 7px}
.select svg{color:#777}
.gearbtn{width:24px;height:24px;background:#414141;border:1px solid #585858;border-radius:3px;display:flex;align-items:center;justify-content:center}
.tree{height:680px;background:#262626;padding:1px 1px 0;overflow:hidden;display:flex;flex-direction:column}
.row{height:22px;flex:none;display:flex;align-items:center;padding-left:5px;overflow:hidden}
.row .ex{margin-right:0;color:#9a9a9a}
.row .srv{margin-right:8px}
.n1{padding-left:20px}.n1 .ex+svg{margin:2px 5px 0 1px}
.n2{padding-left:48px}.n2 svg{margin-right:3px}.n2 .wide{margin-right:0}
.n2.st{height:22.600px}.n2.st svg{margin-right:3px}
.sel{background:#585858}
.tag{padding-left:31px}.tag svg{margin-right:7px}
.tagdot{width:12px;height:12px;border-radius:50%;background:#bfa3d0;margin-left:5px}
.hscroll{height:15px;margin-top:auto;background:#2c2c2c;display:flex;align-items:center;padding:0 6px 0 5px}
.thumb{width:244px;height:9px;border-radius:5px;background:#9f9f9f;margin:0 auto 0 8px}

/* guest panel */
.main{width:1605px;background:#262626;display:flex;flex-direction:column}
.title{height:37px;flex:none;border-bottom:1px solid #414141;display:flex;align-items:center;padding:0 8px;-webkit-text-stroke:.35px}
.notag{color:#858585;margin-left:25px}
.pen{margin-left:3px}
.tools{margin-left:auto;display:flex}
.tools .btn{margin-left:9px}.tools .btn:nth-child(3),.tools .help{margin-left:8px}
.tools .dis svg:first-child{margin-right:7px}.tools .help svg:first-child{margin-right:7px}
.body{flex:1;display:flex;min-height:0}
.menu{width:170px;border-right:1px solid #414141;padding-top:5px;display:flex;flex-direction:column;gap:5px;position:relative;-webkit-text-stroke:.25px}
.mi{height:24px;display:flex;align-items:center;letter-spacing:.05px;padding-bottom:2px}
.mi span{width:16px;margin:3px 7px 0 8px;display:flex;justify-content:center}
.mi.act{background:#005fa6}
.mi .sub{margin-left:auto;margin-right:16px}
.handle{position:absolute;left:170px;top:254px;width:15px;height:50px;background:#4d4d4d;box-shadow:3px 3px 0 #171717;display:flex;align-items:center;justify-content:center}
.vm{width:1075px;margin-left:180px;display:flex;flex-direction:column}
.gbar{height:27px;flex:none;background:#131313;display:flex;align-items:center;padding:0 14px 0 12px;color:#e3e3e3;font:12px "Open Sans",sans-serif}
.pill{width:25px;height:7px;border-radius:4px;background:#fff;margin-top:0}
.pd{width:5px;height:5px;border-radius:50%;background:#8b8b8b;margin-left:5px}
.date{margin-left:479px;width:90px;letter-spacing:-.1px;padding-bottom:1px}
.gi{margin-left:auto;display:flex;gap:11px}
.desk{flex:1;display:flex;position:relative;min-height:0}
.dock{width:56px;flex:none;background:linear-gradient(#180f15,#24151d);border-right:1px solid #8b8088;display:flex;flex-direction:column;align-items:center;padding:5px 0 14px;position:relative}
.tile{width:50px;height:50px;border-radius:9px;background:#413740;display:flex;align-items:center;justify-content:center;padding-bottom:2px}
.d-files{margin-top:12px}.d-app{margin-top:19px}.d-help{margin-top:17px}.d-term{margin-top:19px}
.sepd{width:41px;height:1px;background:#443b42;margin-top:12px}
.d-disc{margin-top:8px}.d-trash{margin-top:16px}.d-ubu{margin-top:auto}
.rec{font:22px "DejaVu Sans",sans-serif;fill:#26851b}
.run{position:absolute;left:2px;width:5px;height:5px;border-radius:50%;background:#dc4a1c}
.r1{top:27px}.r2{top:242px}
.ff{flex:1;min-width:0;background:#fff;display:flex;flex-direction:column;color:#444;font:12.200px "Noto Sans",sans-serif}
.tabs{height:37px;background:#eaeaea;display:flex;align-items:center;padding-right:5px}
.hist{width:36px;height:37px;border-right:1px solid #ccc;display:flex;align-items:center;justify-content:center}
.tab{width:187px;height:31px;background:#fcfcfc;border-radius:3px;box-shadow:0 0 2px #999;margin-left:3px;padding:0 10px 0 7px;display:flex;align-items:center;justify-content:space-between}
.plus{margin-left:12px}
.tchev{margin-left:auto;margin-right:50px}
.wb{width:19px;height:19px;border-radius:50%;background:#d9d9d9;display:flex;align-items:center;justify-content:center;margin-left:9.500px}
.tchev+.wb{margin-left:0}
.bar{height:34px;background:#fbfbfb;border-bottom:1px solid #d3d3d3;display:flex;align-items:center;padding:0 14px 0 13px}
.b2{color:#aaa;margin-left:18px}.b3{margin-left:17px}
.ub{width:648px;height:27px;margin-left:83px;background:#ededed;border-radius:3px;display:flex;align-items:center;padding:0 6px}
.pg{margin-left:13px}.lu{margin-left:10px}.lu em{font-style:normal;color:#999}
.tr{margin-left:auto;margin-right:10px}
.fi{margin-left:auto;display:flex;align-items:center;gap:17.500px}
.page{padding:0 6px;color:#111;font:13.450px/19px "Noto Serif","DejaVu Serif Condensed","DejaVu Serif",serif}
.page h1{font-size:27px;line-height:36px;margin:8px 0 19px;color:#000}
.page p{margin:0 0 13px}
.page hr{margin:0 0 8px;border:0;height:2px;background:#777}
.cursor{position:absolute;left:153px;top:611px}

/* task log */
.splitter{height:5px;flex:none;background:#0d0d0d;display:flex;justify-content:center}
.splitter span{width:48px;height:5px;background:#4a4a4a;border:1px solid #777;border-bottom:0;display:flex;justify-content:center;margin-right:0}
.tasks{height:205px;flex:none;padding:0 5px 5px;display:flex;flex-direction:column;-webkit-text-stroke:.3px}
.tt-tabs{height:35px;background:#262626;display:flex;align-items:center;padding:0 11px;gap:11px;flex:none}
.tb{height:23px;line-height:23px;padding:0 7px}
.tb.on{background:#0078d4;border-radius:2px;width:53px}
.grid{flex:1;background:#262626;border:1px solid #414141}
.gr{display:grid;grid-template-columns:150px 150px 100px 150px 1128px 200px 1fr}
.gh{height:31px;border-bottom:2px solid #414141}
.gh span{border-right:1px solid #414141;padding-left:10px;display:flex;align-items:center}
.gh .sorted{background:#1d394e}.sorted svg{margin-left:4px}
.gd{height:25px;border-bottom:1px solid #414141}
.gd span{padding-left:10px;display:flex;align-items:center}
.gd .cm{padding:0;justify-content:center}
.gd .ar{padding:0 0 2px 10px}

/* desktop taskbar */
.taskbar{height:40px;flex:none;background:#2a302f;display:flex;font-family:"Open Sans",sans-serif}
.start{width:48px;display:flex;align-items:center;justify-content:center}
.wsearch{width:288px;background:#f2f2f2;border:1px solid #c8c8c8;color:#222;font-size:14px;letter-spacing:-.2px;display:flex;align-items:center;padding-left:11px;gap:11px}
.ti{width:49px;height:40px;display:flex;align-items:center;justify-content:center}
.tv{margin-right:1px}
.ul{background:linear-gradient(#76b9ed,#76b9ed) bottom/40px 2px no-repeat}
.cur{background:linear-gradient(#76b9ed,#76b9ed) bottom/100% 2px no-repeat #565a5a}
.tray{margin-left:auto;display:flex;align-items:center;font-size:13.500px;letter-spacing:-.3px}
.ibex{width:46px;margin-left:8px}.pct{width:47px;margin-left:9px;color:#1fbf1f;letter-spacing:0}
.up{margin-left:22px}.mute{margin-left:9px}.net{margin-left:10px}
.clock{width:70px;margin-left:3px;display:flex;flex-direction:column;align-items:center;font-size:12px;letter-spacing:-.45px;line-height:18px}
.notif{margin-left:12px}
.peek{width:5px;height:40px;margin-left:19px;border-left:1px solid #777}
```
